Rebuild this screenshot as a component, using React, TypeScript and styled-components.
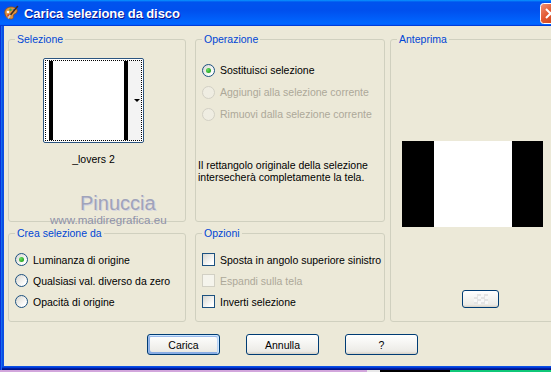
import * as React from 'react'
import styled, { createGlobalStyle, css } from 'styled-components'

const GlobalStyle = createGlobalStyle`
  html, body {
    margin: 0;
    padding: 0;
    width: 551px;
    height: 372px;
    overflow: hidden;
  }
  body {
    font-family: "Liberation Sans", Arial, sans-serif;
    font-size: 10.5px;
    color: #000;
    background: linear-gradient(to right, #d2a6dc 0 367px, #e8e8e8 367px 380px, #000 380px 450px, #10c878 450px);
  }
`

const Window = styled.div`
  position: relative;
  width: 570px;
  display: flex;
  flex-direction: column;
`

const TitleBar = styled.div`
  height: 26px;
  display: flex;
  align-items: center;
  padding: 0 9px 0 3px;
  box-sizing: border-box;
  background: linear-gradient(180deg, #0997ff, #0053ee 8%, #0050ee 40%, #0066ff 88%, #0066ff 93%, #005bff 95%, #003dd7 96%, #003dd7);
`

const TitleText = styled.span`
  margin-left: 5px;
  font-family: "Liberation Sans", Arial, sans-serif;
  font-weight: bold;
  font-size: 13px;
  color: #fff;
  text-shadow: 1px 1px #0f1089;
  letter-spacing: -0.1px;
`

const CloseButton = styled.div`
  margin-left: auto;
  width: 21px;
  height: 21px;
  display: flex;
`

const Frame = styled.div`
  padding: 0 4px 4px 4px;
  background: #0a4fe4;
  box-shadow: inset 1px 0 #0831d9, inset 2px 0 #166aee, inset 0 -1px #00138c, inset 0 -2px #001ea0, inset 0 -3px #003bda;
`

const Body = styled.div`
  background: #ece9d8;
  padding: 7px 8px 11px 4px;
  display: flex;
  flex-direction: column;
`

const Grid = styled.div`
  display: grid;
  grid-template-columns: 187px 195px 1fr;
  grid-template-rows: 189px 95px;
  row-gap: 5px;
`

const Group = styled.fieldset<{ $width: number; $span?: boolean }>`
  margin: 0;
  padding: 0;
  min-width: 0;
  box-sizing: border-box;
  width: ${p => p.$width}px;
  border: 1px solid #d0d0bf;
  border-radius: 3px;
  display: flex;
  flex-direction: column;
  ${p => p.$span && css`
    grid-column: 3;
    grid-row: 1 / span 2;
  `}
`

const Legend = styled.legend`
  margin-left: 6px;
  padding: 0 2px;
  color: #0046d5;
  font-size: 10.5px;
  line-height: 13px;
`

const SelContent = styled.div`
  padding: 12px 0 0 34px;
  display: flex;
  flex-direction: column;
  align-items: center;
  width: 101px;
`

const Thumb = styled.div`
  width: 101px;
  height: 85px;
  box-sizing: border-box;
  border: 1px solid #2c5580;
  border-radius: 2px;
  padding: 1px;
  background: #fff;
`

const ThumbInner = styled.div`
  height: 100%;
  box-sizing: border-box;
  border: 1px dotted #000;
  display: flex;
`

const ThumbPart = styled.div<{ $w?: number; $color: string }>`
  width: ${p => (p.$w ? `${p.$w}px` : 'auto')};
  flex: ${p => (p.$w ? 'none' : '1')};
  background: ${p => p.$color};
`

const ThumbSide = styled.div`
  flex: none;
  width: 12px;
  background: #f3f3f3;
  display: flex;
  align-items: center;
  justify-content: flex-end;
  padding-right: 1px;
`

const DropArrow = styled.span`
  width: 0;
  height: 0;
  border-left: 3px solid transparent;
  border-right: 3px solid transparent;
  border-top: 3px solid #000;
`

const ThumbName = styled.div`
  margin-top: 10px;
  line-height: 13px;
`

const OpContent = styled.div`
  padding: 13px 0 0 2px;
  display: flex;
  flex-direction: column;
`

const ChoiceList = styled.div<{ $row: number; $pad: number }>`
  display: flex;
  flex-direction: column;
  padding-left: ${p => p.$pad}px;
  & > * {
    height: ${p => p.$row}px;
  }
`

const Choice = styled.label<{ $disabled?: boolean }>`
  display: flex;
  align-items: center;
  gap: 5px;
  color: ${p => (p.$disabled ? '#aca899' : '#000')};
  white-space: nowrap;
`

const RadioMark = styled.span<{ $checked?: boolean; $disabled?: boolean }>`
  flex: none;
  width: 13px;
  height: 13px;
  box-sizing: border-box;
  border-radius: 50%;
  border: 1px solid ${p => (p.$disabled ? '#d2d0c4' : '#1c5180')};
  background: ${p => (p.$disabled ? '#efede2' : 'linear-gradient(135deg, #d8d7d0, #fff 80%)')};
  display: flex;
  align-items: center;
  justify-content: center;
  &::after {
    content: '';
    display: ${p => (p.$checked ? 'block' : 'none')};
    width: 5px;
    height: 5px;
    border-radius: 50%;
    background: radial-gradient(circle at 35% 35%, #6be060, #21a121 75%);
  }
`

const CheckMark = styled.span<{ $disabled?: boolean }>`
  flex: none;
  width: 13px;
  height: 13px;
  box-sizing: border-box;
  border: 1px solid ${p => (p.$disabled ? '#d2d0c4' : '#1c5180')};
  background: ${p => (p.$disabled ? '#f5f4ec' : 'linear-gradient(135deg, #d8d7d0, #fff 80%)')};
`

const Note = styled.div`
  margin-top: 34px;
  line-height: 12px;
`

const BottomContent = styled.div`
  padding: 9px 0 0 6px;
`

const PreviewContent = styled.div`
  display: flex;
  flex-direction: column;
  align-items: flex-start;
  padding-left: 11px;
`

const PreviewImage = styled.div`
  margin-top: 95px;
  width: 141px;
  height: 86px;
  background: linear-gradient(to right, #000 0 32px, #fff 32px 110px, #000 110px);
`

const SmallButton = styled.div`
  margin: 63px 0 0 60px;
  width: 37px;
  height: 18px;
  box-sizing: border-box;
  border: 1px solid #003c74;
  border-radius: 3px;
  background: linear-gradient(180deg, #fff, #ecebe6 86%, #d6d0c5);
  display: flex;
  align-items: center;
  justify-content: center;
`

const Checker = styled.span`
  width: 14px;
  height: 10px;
  background: repeating-conic-gradient(#e4e4e4 0 25%, #f8f8f8 0 50%) 0 0 / 7px 5px;
`

const ButtonRow = styled.div`
  margin-top: 12px;
  padding-left: 139px;
  display: flex;
  gap: 26px;
`

const Button = styled.button<{ $default?: boolean }>`
  width: 73px;
  height: 21px;
  box-sizing: border-box;
  padding: 0;
  border: 1px solid #003c74;
  border-radius: 3px;
  background: linear-gradient(180deg, #fff, #ecebe6 86%, #d6d0c5);
  font-family: "Liberation Sans", Arial, sans-serif;
  font-size: 10.5px;
  color: #000;
  ${p => p.$default && css`
    box-shadow: inset -1px 1px #cee7ff, inset 1px 2px #98b8ea, inset -2px 2px #bcd4f6, inset 1px -1px #89ade4, inset 2px -2px #89ade4;
  `}
`

const Watermark = styled.div`
  position: absolute;
  left: 50px;
  top: 193px;
  display: flex;
  flex-direction: column;
  align-items: flex-start;
  pointer-events: none;
`

const WatermarkName = styled.span`
  margin-left: 30px;
  font-size: 20px;
  line-height: 20px;
  color: #a0a3ba;
  text-shadow: 1px 1px 0 #d4d4e0;
`

const WatermarkSite = styled.span`
  font-size: 11.6px;
  line-height: 13px;
  color: #8e91a8;
`

const PaletteIcon = () => (
  <svg width="16" height="16" viewBox="0 0 16 16">
    <path d="M2 9 C1 5 4 2 8 2 C12 2 15 4 14 7 C13.5 9 11 8.5 10.5 10 C10 12 11 14 8 14 C5 14 2.5 12 2 9 Z" fill="#e0953f" stroke="#8a4e1c" strokeWidth="0.8" />
    <circle cx="5" cy="7" r="1.3" fill="#fff" />
    <circle cx="7.5" cy="4.8" r="1.2" fill="#2fb04a" />
    <circle cx="10.8" cy="5" r="1.1" fill="#2f6fe0" />
    <circle cx="5.5" cy="10.5" r="1.2" fill="#d8302a" />
    <path d="M14.5 1.5 L6.5 11" stroke="#3a2a20" strokeWidth="1.6" strokeLinecap="round" />
    <path d="M7 10.5 L5.5 12.8" stroke="#c8c8c8" strokeWidth="1.8" strokeLinecap="round" />
  </svg>
)

const CloseIcon = () => (
  <svg width="21" height="21" viewBox="0 0 21 21">
    <defs>
      <linearGradient id="closeBg" x1="0" y1="0" x2="1" y2="1">
        <stop offset="0" stopColor="#f09478" />
        <stop offset="0.45" stopColor="#e2582f" />
        <stop offset="1" stopColor="#c23c18" />
      </linearGradient>
    </defs>
    <rect x="0.5" y="0.5" width="20" height="20" rx="3" fill="url(#closeBg)" stroke="#fff" />
    <path d="M6 6 L15 15 M15 6 L6 15" stroke="#fff" strokeWidth="2" />
  </svg>
)

const Radio = ({ label, checked, disabled }: { label: string; checked?: boolean; disabled?: boolean }) => (
  <Choice $disabled={disabled}>
    <RadioMark $checked={checked} $disabled={disabled} />
    {label}
  </Choice>
)

const Check = ({ label, disabled }: { label: string; disabled?: boolean }) => (
  <Choice $disabled={disabled}>
    <CheckMark $disabled={disabled} />
    {label}
  </Choice>
)

export default function App() {
  return (
    <Window>
      <GlobalStyle />
      <TitleBar>
        <PaletteIcon />
        <TitleText>Carica selezione da disco</TitleText>
        <CloseButton>
          <CloseIcon />
        </CloseButton>
      </TitleBar>
      <Frame>
        <Body>
          <Grid>
            <Group $width={178}>
              <Legend>Selezione</Legend>
              <SelContent>
                <Thumb>
                  <ThumbInner>
                    <ThumbPart $w={3} $color="#fff" />
                    <ThumbPart $w={4} $color="#000" />
                    <ThumbPart $color="#fff" />
                    <ThumbPart $w={4} $color="#000" />
                    <ThumbSide>
                      <DropArrow />
                    </ThumbSide>
                  </ThumbInner>
                </Thumb>
                <ThumbName>_lovers 2</ThumbName>
              </SelContent>
            </Group>
            <Group $width={190}>
              <Legend>Operazione</Legend>
              <OpContent>
                <ChoiceList $row={22} $pad={4}>
                  <Radio label="Sostituisci selezione" checked />
                  <Radio label="Aggiungi alla selezione corrente" disabled />
                  <Radio label="Rimuovi dalla selezione corrente" disabled />
                </ChoiceList>
                <Note>
                  Il rettangolo originale della selezione
                  <br />
                  intersecherà completamente la tela.
                </Note>
              </OpContent>
            </Group>
            <Group $width={172} $span>
              <Legend>Anteprima</Legend>
              <PreviewContent>
                <PreviewImage />
                <SmallButton>
                  <Checker />
                </SmallButton>
              </PreviewContent>
            </Group>
            <Group $width={178}>
              <Legend>Crea selezione da</Legend>
              <BottomContent>
                <ChoiceList $row={21} $pad={0}>
                  <Radio label="Luminanza di origine" checked />
                  <Radio label="Qualsiasi val. diverso da zero" />
                  <Radio label="Opacità di origine" />
                </ChoiceList>
              </BottomContent>
            </Group>
            <Group $width={190}>
              <Legend>Opzioni</Legend>
              <BottomContent>
                <ChoiceList $row={21} $pad={0}>
                  <Check label="Sposta in angolo superiore sinistro" />
                  <Check label="Espandi sulla tela" disabled />
                  <Check label="Inverti selezione" />
                </ChoiceList>
              </BottomContent>
            </Group>
          </Grid>
          <ButtonRow>
            <Button $default>Carica</Button>
            <Button>Annulla</Button>
            <Button>?</Button>
          </ButtonRow>
        </Body>
      </Frame>
      <Watermark>
        <WatermarkName>Pinuccia</WatermarkName>
        <WatermarkSite>www.maidiregrafica.eu</WatermarkSite>
      </Watermark>
    </Window>
  )
}
